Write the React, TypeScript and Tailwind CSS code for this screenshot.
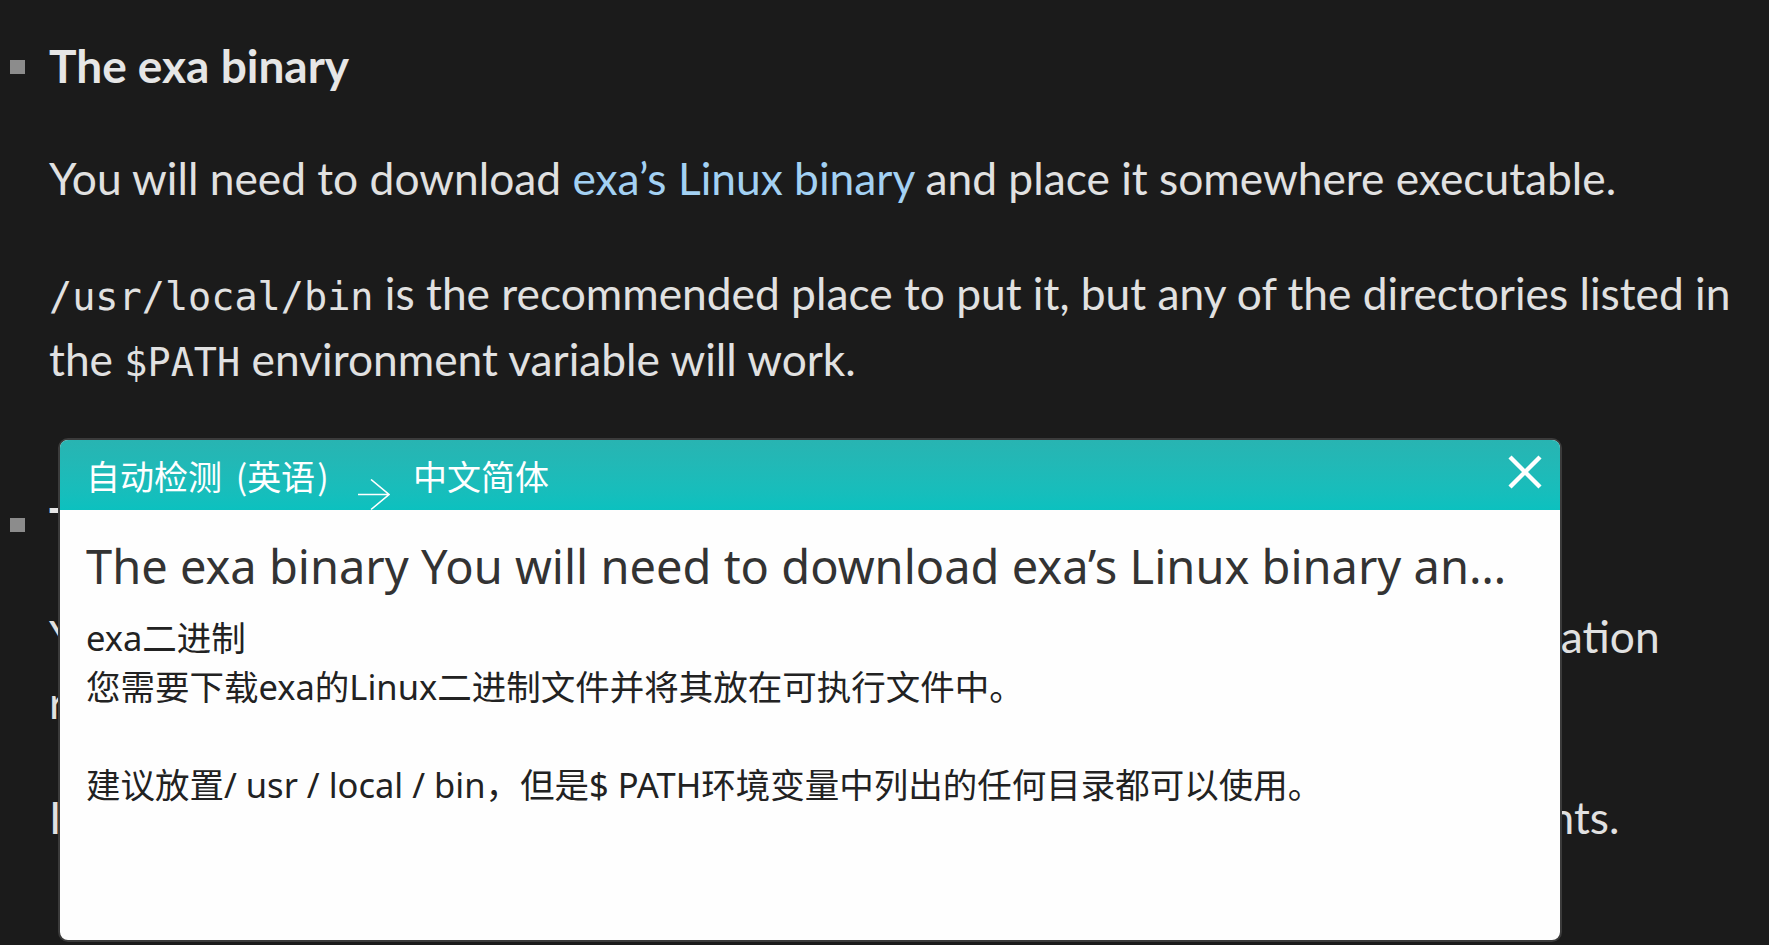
import React from "react";

const pageFont = { fontFamily: "Lato, 'Noto Sans', sans-serif" };
const monoFont = { fontFamily: "'DejaVu Sans Mono', 'Liberation Mono', monospace" };
const cjkFont = { fontFamily: "'Noto Sans CJK SC', 'Noto Sans', sans-serif" };
const popupFont = { fontFamily: "'Noto Sans', 'Noto Sans CJK SC', sans-serif" };

function Code({ children }: { children: React.ReactNode }) {
  return (
    <code className="text-[38.5px] leading-none" style={monoFont}>
      {children}
    </code>
  );
}

function Section({ title, children }: { title: string; children: React.ReactNode }) {
  return (
    <li className="flex">
      {/* square marker */}
      <div className="w-[49px] shrink-0 pl-[10px] pt-[27px]">
        <div className="h-[14px] w-[15px] bg-[#8c8c8c]" />
      </div>
      <div className="min-w-0 flex-1">
        <h3 className="mb-[46px] text-[46px] font-bold leading-[66px] text-[#e6e6e6]">{title}</h3>
        <div className="flex flex-col gap-[49px]">{children}</div>
      </div>
    </li>
  );
}

function TranslatePopup() {
  return (
    <div className="absolute left-[58px] top-[438px] flex h-[504px] w-[1504px] flex-col overflow-hidden rounded-[10px] border-2 border-[#3b3b3b] bg-[#fefefe]">
      {/* header bar */}
      <div
        className="flex h-[70px] shrink-0 items-center bg-linear-to-b from-[#28b4b2] to-[#0bc1bf] pl-[26px] pr-[18px] text-[34px] text-white"
        style={cjkFont}
      >
        <span className="w-[272px] shrink-0 whitespace-nowrap">
          自动检测 <span className="ml-[6px]">(</span>英语<span className="ml-[2px]">)</span>
        </span>
        <svg width="32" height="32" viewBox="0 0 32 32" className="shrink-0 translate-y-[20px]" fill="none">
          <path d="M0 15.5 H31 M13 0.5 L31 15.5 L13 30.5" stroke="white" strokeWidth="1.6" />
        </svg>
        <span className="ml-[23px] whitespace-nowrap">中文简体</span>
        <button className="ml-auto -translate-y-[3px] cursor-pointer">
          <svg width="34" height="34" viewBox="0 0 34 34" fill="none">
            <path d="M2 2 L32 32 M32 2 L2 32" stroke="white" strokeWidth="4.4" />
          </svg>
        </button>
      </div>

      {/* translated content */}
      <div className="min-h-0 flex-1 pl-[26px] pr-[26px] pt-[23px]" style={popupFont}>
        <div className="truncate text-[47px] leading-[66px] text-[#333333]">
          The exa binary You will need to download exa’s Linux binary and place it somewhere executable.
          /usr/local/bin is the recommended place to put it
        </div>
        <div className="mt-[14px] whitespace-pre-line text-[34.5px] leading-[49px] text-[#222222]">
          {"exa二进制\n您需要下载exa的Linux二进制文件并将其放在可执行文件中。\n\n建议放置/ usr / local / bin，但是$ PATH环境变量中列出的任何目录都可以使用。"}
        </div>
      </div>
    </div>
  );
}

export default function App() {
  return (
    <div className="relative h-screen w-full overflow-hidden bg-[#1b1b1b] text-[#e1e1e1]" style={pageFont}>
      <ul className="pt-[33px]">
        <Section title="The exa binary">
          <p className="text-[44.3px] leading-[66px]">
            You will need to download <a className="text-[#a3d1f3]">exa’s Linux binary</a> and place it somewhere
            executable.
          </p>
          <p className="text-[44.3px] leading-[66px]">
            <Code>/usr/local/bin</Code> is the recommended place to put it, but any of the directories listed in
            <br />
            the <Code>$PATH</Code> environment variable will work.
          </p>
        </Section>
        <div className="h-[99px]" />
        <Section title="The manual page">
          <p className="text-[44.3px] leading-[66px]">
            You can also download <a className="text-[#a3d1f3]">exa’s manual page</a>, which contains thorough
            documentation
            <br />
            regarding all of its command-line options.
          </p>
          <p className="text-[44.3px] leading-[66px]">
            It is also possible to install the shell completions for all its options and arguments.
          </p>
        </Section>
      </ul>
      <TranslatePopup />
    </div>
  );
}
